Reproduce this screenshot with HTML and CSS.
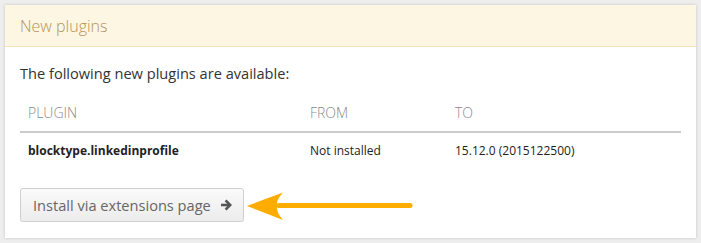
FILE: index.html
```html
<!DOCTYPE html>
<html lang="en">
<head>
    <meta charset="UTF-8">
    <title>New plugins</title>
    <link rel="stylesheet" href="styles.css">
</head>
<body>
    <div class="panel">
        <div class="panel-heading">
            <h3>New plugins</h3>
        </div>
        <div class="panel-body">
            <p>The following new plugins are available:</p>
            <table class="plugins">
                <thead>
                    <tr>
                        <th class="col-plugin">Plugin</th>
                        <th class="col-from">From</th>
                        <th class="col-to">To</th>
                    </tr>
                </thead>
                <tbody>
                    <tr>
                        <td><strong>blocktype.linkedinprofile</strong></td>
                        <td>Not installed</td>
                        <td>15.12.0 (2015122500)</td>
                    </tr>
                </tbody>
            </table>
            <div class="actions">
                <button type="button" class="btn">
                    <span>Install via extensions page</span>
                    <svg class="icon" width="12" height="12" viewBox="0 0 12 12" aria-hidden="true">
                        <path d="M1 6h8.5" stroke="#555" stroke-width="2.6" fill="none"/>
                        <path d="M5.6 1.4l4.6 4.6-4.6 4.6" stroke="#555" stroke-width="2.6" fill="none"/>
                    </svg>
                </button>
                <svg class="pointer" width="172" height="34" viewBox="0 0 172 34" aria-hidden="true">
                    <line x1="34" y1="17.5" x2="165" y2="17.5" stroke="#ffac00" stroke-width="5" stroke-linecap="round"/>
                    <path d="M2 18 Q20 11 38 4.5 Q31 12 32 18 Q31 24 38 32 Q20 25 2 18 Z" fill="#ffac00"/>
                </svg>
            </div>
        </div>
    </div>
</body>
</html>
```

FILE: styles.css
```css
body {
    margin: 0;
    padding: 5px;
    background: #eeeeee;
    font-family: 'Open Sans', 'Noto Sans', sans-serif;
    font-size: 14px;
    line-height: 20px;
    color: #333;
}

.panel {
    background: #fff;
    height: 233px;
    box-shadow: 0 0 3px rgba(0, 0, 0, 0.18);
}

.panel-heading {
    height: 41px;
    background: #fcf6e3;
    border-bottom: 1px solid #f7e4bf;
    padding: 0 15px;
    display: flex;
    align-items: center;
}

.panel-heading h3 {
    margin: 0;
    font-size: 16px;
    font-weight: 300;
    color: #b8935a;
}

.panel-body {
    padding: 16px 15px 0;
}

.panel-body p {
    margin: 0 0 10px;
    font-size: 14.6px;
}

.plugins {
    width: 100%;
    border-collapse: collapse;
    table-layout: fixed;
    margin-bottom: 19px;
}

.plugins th {
    text-align: left;
    font-weight: 300;
    text-transform: uppercase;
    color: #8a8a8a;
    padding: 10px 8px 8px;
    border-bottom: 2px solid #cccccc;
}

.plugins td {
    padding: 8px;
    font-size: 12px;
    color: #222;
}

.col-plugin { width: 266px; }
.col-from { width: 129px; }

.actions {
    display: flex;
    align-items: center;
}

.btn {
    font-family: inherit;
    font-size: 14.6px;
    color: #666;
    height: 34px;
    width: 224px;
    padding: 0 11px 0 12px;
    display: flex;
    align-items: center;
    justify-content: space-between;
    white-space: nowrap;
    border: 1px solid #d0d0d0;
    border-radius: 3px;
    background: linear-gradient(#fafafa, #ececec);
    cursor: pointer;
}

.btn .icon {
    flex-shrink: 0;
}

.pointer {
    margin-left: 1px;
}
```
